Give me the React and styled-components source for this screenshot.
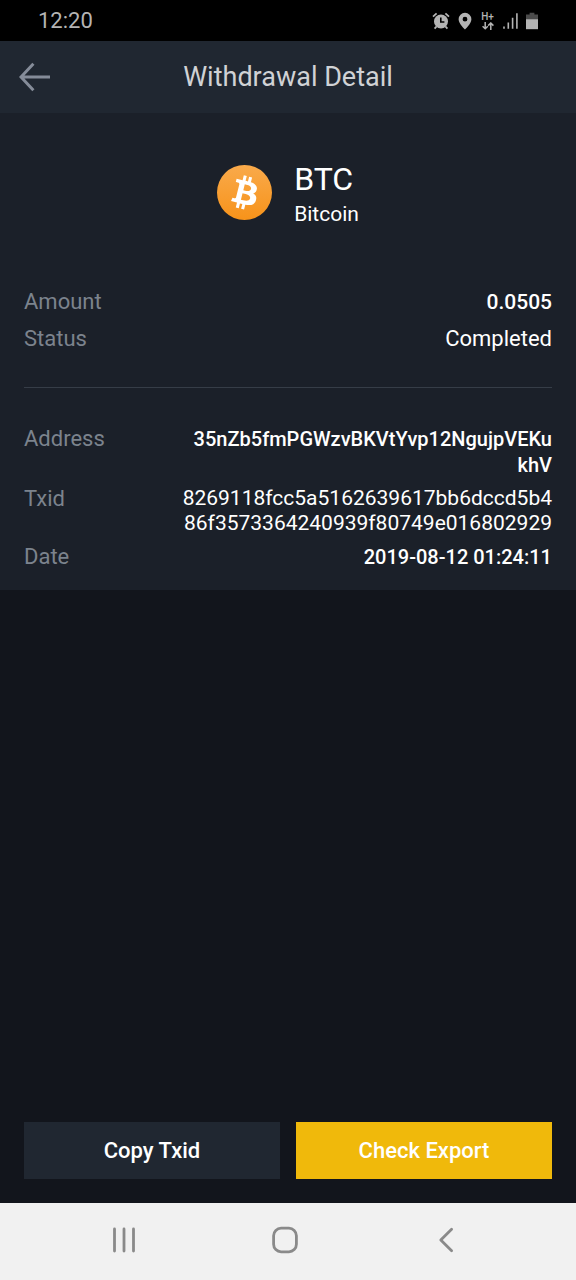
import React from "react";
import styled, { createGlobalStyle } from "styled-components";

const asset = { symbol: "BTC", name: "Bitcoin" };

const summary = [
  { label: "Amount", value: "0.0505", strong: true },
  { label: "Status", value: "Completed", size: 22 }
];

const details = [
  {
    label: "Address",
    value: "35nZb5fmPGWzvBKVtYvp12NgujpVEKukhV",
    strong: true,
    size: 20
  },
  {
    label: "Txid",
    value: "8269118fcc5a5162639617bb6dccd5b486f3573364240939f80749e016802929",
    line: 25
  },
  { label: "Date", value: "2019-08-12 01:24:11", strong: true, size: 20 }
];

function AlarmIcon() {
  return (
    <svg width="18" height="18" viewBox="0 0 18 18" aria-hidden="true">
      <circle cx="9" cy="9.5" r="7" fill="currentColor" />
      <path
        d="M1 4.6 4.6 1.4M17 4.6 13.4 1.4M4.4 14.6 2.6 16.6M13.6 14.6l1.8 2"
        stroke="currentColor"
        strokeWidth="1.8"
        fill="none"
      />
      <path d="M8.8 5.4V10h3.6" stroke="#000" strokeWidth="1.6" fill="none" />
    </svg>
  );
}

function PinIcon() {
  return (
    <svg width="14" height="18" viewBox="0 0 14 18" aria-hidden="true">
      <path
        fillRule="evenodd"
        fill="currentColor"
        d="M7 .8a6.4 6.4 0 0 0-6.4 6.4C.6 11.6 7 17.4 7 17.4s6.4-5.8 6.4-10.2A6.4 6.4 0 0 0 7 .8zm0 4a2.4 2.4 0 1 1 0 4.8 2.4 2.4 0 0 1 0-4.8z"
      />
    </svg>
  );
}

function DataArrowsIcon() {
  return (
    <svg width="12" height="8" viewBox="0 0 12 8" aria-hidden="true">
      <path
        d="M3.2 0v6.6M.6 4.2l2.6 2.6 2.6-2.6M8.8 8V1.2M6.2 3.6 8.8 1l2.6 2.6"
        stroke="currentColor"
        strokeWidth="1.5"
        fill="none"
      />
    </svg>
  );
}

function SignalIcon() {
  return (
    <svg width="15" height="18" viewBox="0 0 15 18" aria-hidden="true">
      <path
        d="M1 14.4v2.4M5.3 10.4v6.4M9.6 5.8v11M13.9 1.2v15.6"
        stroke="currentColor"
        strokeWidth="1.6"
      />
    </svg>
  );
}

function BatteryIcon() {
  return (
    <svg width="12" height="18" viewBox="0 0 12 18" aria-hidden="true">
      <path d="M3.6 .8h4.8v1.8H12v5H0v-5h3.6z" fill="#4b4b4b" />
      <path d="M0 7.2h12v10H0z" fill="currentColor" />
    </svg>
  );
}

function ArrowLeftIcon() {
  return (
    <svg width="32" height="30" viewBox="0 0 32 30" aria-hidden="true">
      <path
        d="M31 15H2M14.4 1.8 2 15l12.4 13.2"
        stroke="currentColor"
        strokeWidth="3"
        fill="none"
      />
    </svg>
  );
}

function BitcoinLogo() {
  return (
    <svg width="55" height="55" viewBox="0 0 32 32" aria-hidden="true">
      <defs>
        <linearGradient id="btc" x1="0" y1="0" x2="0" y2="1">
          <stop offset="0" stopColor="#f9aa4b" />
          <stop offset="1" stopColor="#f7931a" />
        </linearGradient>
      </defs>
      <circle cx="16" cy="16" r="16" fill="url(#btc)" />
      <path
        fill="#fff"
        d="M23.189 14.02c.314-2.096-1.283-3.223-3.465-3.975l.708-2.84-1.728-.43-.69 2.765c-.454-.114-.92-.22-1.385-.326l.695-2.783L15.596 6l-.708 2.839c-.376-.086-.746-.17-1.104-.26l.002-.009-2.384-.595-.46 1.846s1.283.294 1.256.312c.7.175.826.638.805 1.006l-.806 3.235c.048.012.11.03.18.057l-.183-.045-1.13 4.532c-.086.212-.303.531-.793.41.018.025-1.256-.313-1.256-.313l-.858 1.978 2.25.561c.418.105.828.215 1.231.318l-.715 2.872 1.727.43.708-2.84c.472.127.93.245 1.378.357l-.706 2.828 1.728.43.715-2.866c2.948.558 5.164.333 6.097-2.333.752-2.146-.037-3.385-1.588-4.192 1.13-.26 1.98-1.003 2.207-2.538zm-3.95 5.538c-.533 2.147-4.148.986-5.32.695l.95-3.805c1.172.293 4.929.872 4.37 3.11zm.535-5.569c-.487 1.953-3.495.96-4.47.717l.86-3.45c.975.243 4.118.696 3.61 2.733z"
      />
    </svg>
  );
}

function RecentsIcon() {
  return (
    <svg width="26" height="28" viewBox="0 0 26 28" aria-hidden="true">
      <path
        d="M3.5 3v22M13 3v22M22.5 3v22"
        stroke="currentColor"
        strokeWidth="2.8"
        strokeLinecap="round"
      />
    </svg>
  );
}

function HomeIcon() {
  return (
    <svg width="28" height="30" viewBox="0 0 28 30" aria-hidden="true">
      <rect
        x="2.6"
        y="3.2"
        width="22.8"
        height="23.6"
        rx="7.5"
        stroke="currentColor"
        strokeWidth="2.8"
        fill="none"
      />
    </svg>
  );
}

function ChevronIcon() {
  return (
    <svg width="16" height="28" viewBox="0 0 16 28" aria-hidden="true">
      <path
        d="M13.6 3.2 2.8 14l10.8 10.8"
        stroke="currentColor"
        strokeWidth="2.8"
        strokeLinecap="round"
        strokeLinejoin="round"
        fill="none"
      />
    </svg>
  );
}

function DetailList({ items, gap }) {
  return (
    <List $gap={gap}>
      {items.map(item => (
        <Row key={item.label}>
          <Label>{item.label}</Label>
          <Value $strong={item.strong} $size={item.size} $line={item.line}>
            {item.value}
          </Value>
        </Row>
      ))}
    </List>
  );
}

function App() {
  return (
    <Screen>
      <GlobalStyle />
      <StatusBar>
        <Clock>12:20</Clock>
        <StatusIcons>
          <AlarmIcon />
          <PinIcon />
          <Network>
            <span>H+</span>
            <DataArrowsIcon />
          </Network>
          <SignalIcon />
          <BatteryIcon />
        </StatusIcons>
      </StatusBar>
      <Header>
        <BackButton type="button" aria-label="Back">
          <ArrowLeftIcon />
        </BackButton>
        <Title>Withdrawal Detail</Title>
      </Header>
      <Panel>
        <Asset>
          <BitcoinLogo />
          <div>
            <AssetSymbol>{asset.symbol}</AssetSymbol>
            <AssetName>{asset.name}</AssetName>
          </div>
        </Asset>
        <DetailList items={summary} gap={11} />
        <Divider />
        <DetailList items={details} gap={8} />
      </Panel>
      <Actions>
        <ActionButton type="button">Copy Txid</ActionButton>
        <ActionButton type="button" $primary>
          Check Export
        </ActionButton>
      </Actions>
      <SystemNav>
        <NavButton type="button" aria-label="Recent apps">
          <RecentsIcon />
        </NavButton>
        <NavButton type="button" aria-label="Home">
          <HomeIcon />
        </NavButton>
        <NavButton type="button" aria-label="System back">
          <ChevronIcon />
        </NavButton>
      </SystemNav>
    </Screen>
  );
}

const GlobalStyle = createGlobalStyle`
  * {
    box-sizing: border-box;
  }

  body {
    margin: 0;
    background: #12151c;
    font-family: Roboto, "Liberation Sans", sans-serif;
  }

  button {
    border: 0;
    padding: 0;
    font-family: inherit;
    cursor: pointer;
  }

  svg {
    display: block;
    flex: none;
  }
`;

const Screen = styled.div`
  display: flex;
  flex-direction: column;
  min-height: 100vh;
  color: #fff;
`;

const StatusBar = styled.div`
  display: flex;
  align-items: center;
  justify-content: space-between;
  height: 41px;
  padding: 0 38px;
  background: #000;
  color: #b4b4b4;
`;

const Clock = styled.span`
  font-size: 22px;
  line-height: 26px;
`;

const StatusIcons = styled.div`
  display: flex;
  align-items: center;
  gap: 8px;
`;

const Network = styled.div`
  display: flex;
  flex-direction: column;
  align-items: center;
  width: 15px;

  span {
    font-size: 10px;
    font-weight: 500;
    line-height: 10px;
  }
`;

const Header = styled.header`
  display: grid;
  grid-template-columns: 1fr auto 1fr;
  align-items: center;
  height: 72px;
  padding: 0 19px;
  background: #202731;
`;

const BackButton = styled.button`
  justify-self: start;
  background: none;
  color: #858c99;
`;

const Title = styled.h1`
  margin: 0;
  color: #d0d2d5;
  font-size: 27px;
  font-weight: 400;
  line-height: 32px;
`;

const Panel = styled.main`
  padding: 44px 24px 20px;
  background: #1b2029;
`;

const Asset = styled.section`
  display: flex;
  align-items: center;
  justify-content: center;
  gap: 22px;
  margin-bottom: 62px;
`;

const AssetSymbol = styled.div`
  font-size: 32px;
  line-height: 44px;
`;

const AssetName = styled.div`
  font-size: 21px;
  line-height: 26px;
`;

const List = styled.dl`
  display: flex;
  flex-direction: column;
  gap: ${props => props.$gap}px;
  margin: 0;
`;

const Row = styled.div`
  display: flex;
  justify-content: space-between;
`;

const Label = styled.dt`
  color: #7c838d;
  font-size: 22px;
  line-height: 26px;
`;

const Value = styled.dd`
  width: ${props => (props.$strong ? 69 : 70)}%;
  margin: 0;
  font-size: ${props => props.$size || 21}px;
  font-weight: ${props => (props.$strong ? 500 : 400)};
  line-height: ${props => props.$line || 26}px;
  text-align: right;
  word-break: break-all;
`;

const Divider = styled.hr`
  height: 1px;
  margin: 35px 0 38px;
  border: 0;
  background: #363d47;
`;

const Actions = styled.div`
  display: flex;
  gap: 16px;
  margin-top: auto;
  padding: 24px;
`;

const ActionButton = styled.button`
  flex: 1;
  height: 57px;
  background: ${props => (props.$primary ? "#f0b90b" : "#202731")};
  color: #fff;
  font-size: 22px;
  font-weight: 500;
`;

const SystemNav = styled.nav`
  display: grid;
  grid-template-columns: repeat(3, 1fr);
  height: 77px;
  padding: 0 50px 3px 43px;
  background: #f1f1f1;
`;

const NavButton = styled.button`
  display: flex;
  align-items: center;
  justify-content: center;
  background: none;
  color: #8a8a8a;
`;

export default App;
